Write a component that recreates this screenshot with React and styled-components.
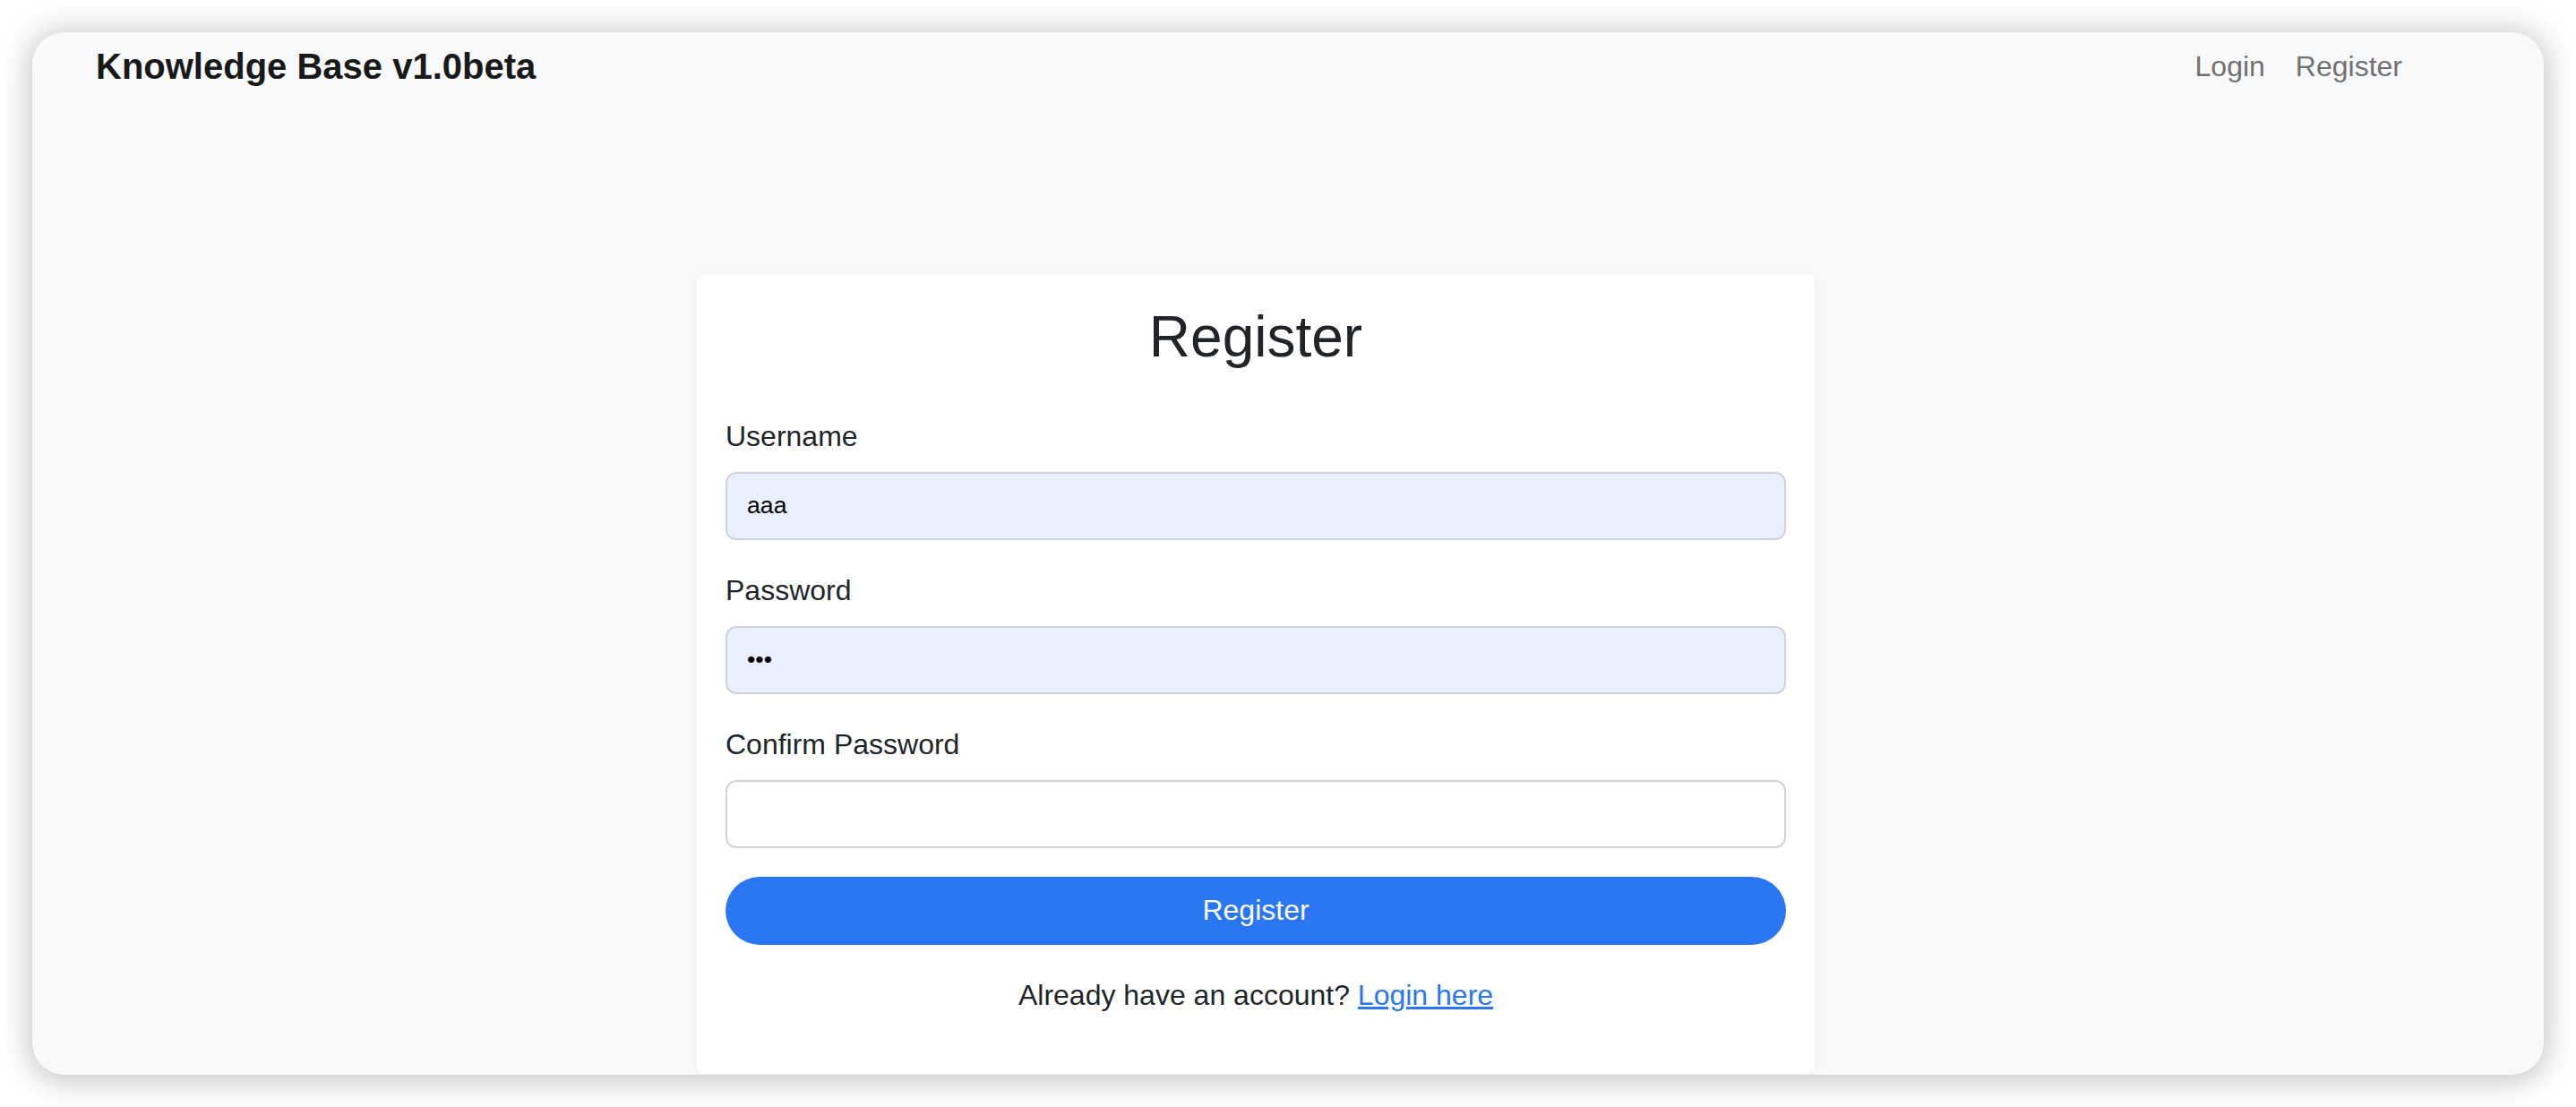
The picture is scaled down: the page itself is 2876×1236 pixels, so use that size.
import styled, { createGlobalStyle } from "styled-components";

const GlobalStyle = createGlobalStyle`
  html, body {
    margin: 0;
    padding: 0;
    background: #ffffff;
  }

  body {
    font-family: "Liberation Sans", Arial, Helvetica, sans-serif;
    color: #212529;
  }

  * {
    box-sizing: border-box;
  }
`;

const fields = [
  { label: "Username", type: "text", value: "aaa", filled: true },
  { label: "Password", type: "password", value: "aaa", filled: true },
  { label: "Confirm Password", type: "password", value: "", filled: false },
];

const App = () => {
  return (
    <>
      <GlobalStyle />
      <Desktop>
        <Window>
          <Navbar>
            <Brand>Knowledge Base v1.0beta</Brand>
            <NavLinks>
              <NavLink href="#">Login</NavLink>
              <NavLink href="#">Register</NavLink>
            </NavLinks>
          </Navbar>
          <Main>
            <Card>
              <CardTitle>Register</CardTitle>
              {fields.map((field) => (
                <FormGroup key={field.label}>
                  <Label>{field.label}</Label>
                  <Input
                    type={field.type}
                    defaultValue={field.value}
                    filled={field.filled ? 1 : 0}
                    readOnly
                  />
                </FormGroup>
              ))}
              <SubmitButton type="button">Register</SubmitButton>
              <FooterText>
                Already have an account? <FooterLink href="#">Login here</FooterLink>
              </FooterText>
            </Card>
          </Main>
        </Window>
      </Desktop>
    </>
  );
};

export default App;

const Desktop = styled.div`
  width: 2876px;
  height: 1236px;
  padding: 36px;
  background: #ffffff;
`;

const Window = styled.div`
  width: 2804px;
  height: 1164px;
  border-radius: 36px;
  background: #f8f9fa;
  overflow: hidden;
  box-shadow: 0 0 34px 6px rgba(0, 0, 0, 0.16), 0 10px 30px rgba(0, 0, 0, 0.08);
`;

const Navbar = styled.div`
  display: flex;
  align-items: flex-start;
  justify-content: space-between;
  height: 112px;
  padding: 8px 158px 0 71px;
`;

const Brand = styled.div`
  font-size: 40px;
  line-height: 60px;
  font-weight: 700;
  color: #191919;
`;

const NavLinks = styled.div`
  display: flex;
  gap: 34px;
  margin-top: 6px;
`;

const NavLink = styled.a`
  font-size: 32px;
  line-height: 48px;
  color: #707172;
  text-decoration: none;
`;

const Main = styled.div`
  display: flex;
  justify-content: center;
  padding: 158px 72px 0 0;
`;

const Card = styled.div`
  width: 1248px;
  padding: 32px;
  background: #ffffff;
  border-radius: 8px;
  box-shadow: 0 2px 10px rgba(0, 0, 0, 0.05);
`;

const CardTitle = styled.h2`
  margin: 0 0 48px;
  font-size: 64px;
  line-height: 1.2;
  font-weight: 400;
  text-align: center;
  color: #212529;
`;

const FormGroup = styled.div`
  margin-bottom: 32px;
`;

const Label = styled.label`
  display: block;
  margin-bottom: 16px;
  font-size: 32px;
  line-height: 48px;
  color: #212529;
`;

const Input = styled.input`
  display: block;
  width: 100%;
  height: 76px;
  padding: 0 22px;
  border: 2px solid #ced4da;
  border-radius: 12px;
  background: ${({ filled }) => (filled ? "#e8f0fe" : "#ffffff")};
  font-family: "Liberation Sans", Arial, Helvetica, sans-serif;
  font-size: 26.67px;
  color: #000000;
  outline: none;
`;

const SubmitButton = styled.button`
  display: block;
  width: 100%;
  height: 76px;
  border: none;
  border-radius: 38px;
  background: #2a76f3;
  color: #ffffff;
  font-family: "Liberation Sans", Arial, Helvetica, sans-serif;
  font-size: 32px;
  cursor: pointer;
`;

const FooterText = styled.p`
  margin: 32px 0;
  font-size: 32px;
  line-height: 48px;
  text-align: center;
  color: #212529;
`;

const FooterLink = styled.a`
  color: #2a76f3;
  text-decoration: underline;
`;
